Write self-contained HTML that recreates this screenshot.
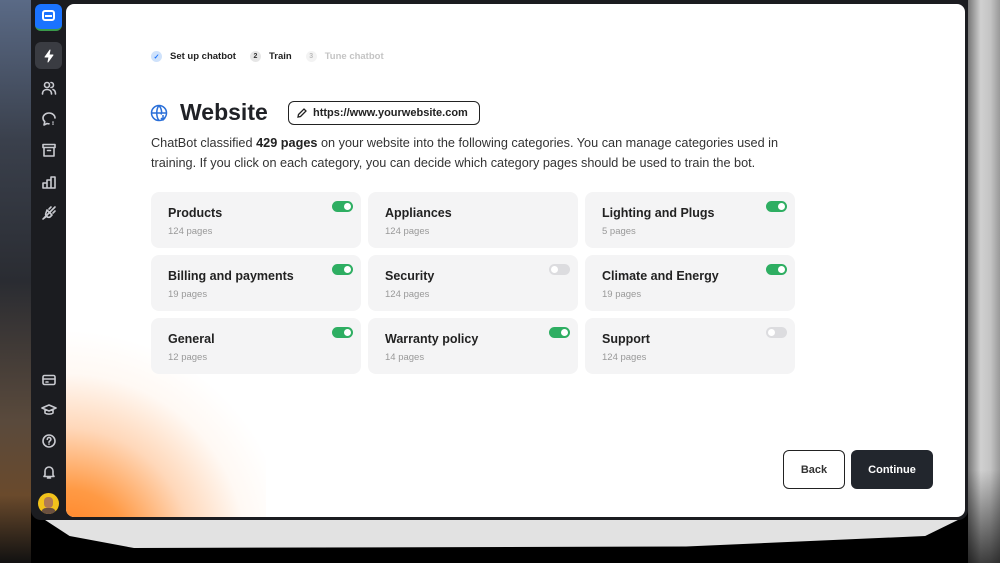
<!DOCTYPE html>
<html><head><style>
*{margin:0;padding:0;box-sizing:border-box}
html,body{width:1000px;height:563px;overflow:hidden}
body{background:#000;font-family:"Liberation Sans",sans-serif;position:relative}
.lbg{position:absolute;left:0;top:0;width:31px;height:563px;background:linear-gradient(180deg,#5a6a86 0%,#3a404c 25%,#2a2c32 50%,#5a4a3c 75%,#6a4a2c 88%,#111 100%)}
.rbg{position:absolute;left:968px;top:0;width:32px;height:563px;background:linear-gradient(90deg,#777 0%,#d0d0d0 40%,#c4c4c4 70%,#999 100%)}
.rbg2{position:absolute;left:968px;top:470px;width:32px;height:93px;background:linear-gradient(180deg,rgba(0,0,0,0),rgba(0,0,0,.7))}
.shadow{position:absolute;left:42px;top:518px;width:920px;height:30px;background:#e2e2e2;clip-path:polygon(0 0,100% 0,96% 60%,70% 95%,10% 100%,3% 60%)}
.frame{position:absolute;left:31px;top:0;width:937px;height:520px;background:#1b1c20;border-radius:0 0 10px 10px}
.panel{position:absolute;left:66px;top:4px;width:899px;height:513px;background:#fff;border-radius:8px;overflow:hidden}
.glow{position:absolute;left:-200px;top:250px;width:400px;height:400px;background:radial-gradient(circle at 50% 75%,#ff7a18 0%,#ff9a45 18%,rgba(255,190,140,.6) 35%,rgba(255,230,210,.25) 50%,rgba(255,255,255,0) 62%)}
.sb{position:absolute;left:31px;top:0;width:35px;height:520px}
.ic{position:absolute;left:4px;width:27px;height:27px;display:flex;align-items:center;justify-content:center}
.ic svg{width:16px;height:16px;fill:none;stroke:#c9cad0;stroke-width:1.6;stroke-linecap:round;stroke-linejoin:round}
.steps{position:absolute;left:151px;top:51px;font-size:9.5px;font-weight:bold;display:flex;align-items:center;color:#222}
.dot{width:11px;height:11px;border-radius:50%;display:inline-flex;align-items:center;justify-content:center;font-size:7px;margin-right:8px}
h1{position:absolute;left:180px;top:99px;font-size:23px;font-weight:bold;color:#1f2126}
.url{position:absolute;left:288px;top:101px;width:192px;height:24px;border:1.5px solid #222;border-radius:6px;font-size:11px;font-weight:bold;color:#222;padding:5px 0 0 24px}
.desc{position:absolute;left:151px;top:134px;width:660px;font-size:12.7px;line-height:19.5px;color:#333}
.card{position:absolute;width:210px;height:56px;background:#f4f4f5;border-radius:8px}
.card b{position:absolute;left:17px;top:14px;font-size:12.5px;color:#222}
.card span{position:absolute;left:17px;top:34px;font-size:9.5px;color:#999}
.tg{position:absolute;right:8px;top:9px;width:21px;height:11px;border-radius:6px;background:#2eae62}
.tg::after{content:"";position:absolute;right:2px;top:2px;width:7px;height:7px;border-radius:50%;background:#fff}
.tg.off{background:#dcdcdf}.tg.off::after{right:auto;left:2px}
.btn{position:absolute;top:450px;height:39px;border-radius:6px;font-size:11px;font-weight:bold;display:flex;align-items:center;justify-content:center}
</style></head><body>
<div class="lbg"></div><div class="rbg"></div><div class="rbg2"></div>
<div class="shadow"></div>
<div class="frame"></div>
<div class="sb">
<div style="position:absolute;left:4px;top:4px;width:27px;height:27px;background:#1a73ff;border-radius:6px;border-bottom:2px solid #3a9a4a"><div style="position:absolute;left:7px;top:6px;width:13px;height:11px;border:2px solid #fff;border-radius:3px"></div><div style="position:absolute;left:10px;top:11px;width:7px;height:2px;background:#fff"></div></div>
<div class="ic" style="top:42px;background:#3a3c42;border-radius:6px"><svg viewBox="0 0 16 16"><path d="M9 2L4 9h4l-1 5 5-7H8z" fill="#fff" stroke="#fff" stroke-width="1"/></svg></div>
<div class="ic" style="top:74px"><svg viewBox="0 0 16 16"><circle cx="6" cy="5" r="2.5"/><path d="M1.5 14c0-3 2-4.5 4.5-4.5S10.5 11 10.5 14M10 2.5a2.5 2.5 0 010 5M12 9.5c1.5.5 2.5 2 2.5 4.5"/></svg></div>
<div class="ic" style="top:105px"><svg viewBox="0 0 16 16"><path d="M8 2a6 5 0 00-6 5c0 1.5.7 2.7 1.8 3.6L3 14l3-1.5c.6.2 1.3.3 2 .3M14 7a6 5 0 00-6-5M12 11v.1M12 13v.1"/></svg></div>
<div class="ic" style="top:136px"><svg viewBox="0 0 16 16"><rect x="2" y="2.5" width="12" height="3"/><path d="M3 5.5V14h10V5.5M6.5 8.5h3"/></svg></div>
<div class="ic" style="top:168px"><svg viewBox="0 0 16 16"><path d="M2 14V9h4v5M6 14V6h4v8M10 14V3h4v11H2"/></svg></div>
<div class="ic" style="top:199px"><svg viewBox="0 0 16 16"><path d="M6 5l5 5-2 2a3 3 0 01-4-4zM8 4l2-2M12 8l2-2M6 11l-4 3M3 13l11-11"/></svg></div>
<div class="ic" style="top:366px"><svg viewBox="0 0 16 16"><rect x="2" y="3.5" width="12" height="9" rx="1.5"/><path d="M2 7h12M5 10h2"/></svg></div>
<div class="ic" style="top:396px"><svg viewBox="0 0 16 16"><path d="M1 6l7-3 7 3-7 3zM4 7.5V11c2 1.5 6 1.5 8 0V7.5"/></svg></div>
<div class="ic" style="top:427px"><svg viewBox="0 0 16 16"><circle cx="8" cy="8" r="6"/><path d="M6.3 6.3a1.8 1.8 0 113 1.3c-.8.5-1.3.9-1.3 1.7M8 11v.1"/></svg></div>
<div class="ic" style="top:458px"><svg viewBox="0 0 16 16"><path d="M4 11V7a4 4 0 018 0v4l1 1.5H3zM6.5 14h3"/></svg></div>
<div style="position:absolute;left:7px;top:493px;width:21px;height:21px;border-radius:50%;background:#f2c21b;overflow:hidden"><div style="position:absolute;left:6px;top:4px;width:9px;height:11px;border-radius:4px;background:#b07a55"></div><div style="position:absolute;left:3px;top:15px;width:15px;height:8px;border-radius:5px 5px 0 0;background:#6a5040"></div></div>
</div>
<div class="panel"><div class="glow"></div></div>
<div class="steps">
<span class="dot" style="background:#cfe2fb;color:#1a73ff">✓</span>Set up chatbot
<span class="dot" style="background:#e6e6e6;color:#333;margin-left:14px">2</span>Train
<span class="dot" style="background:#f3f3f3;color:#bbb;margin-left:14px">3</span><span style="color:#c4c4c4">Tune chatbot</span>
</div>
<svg style="position:absolute;left:150px;top:104px" width="18" height="18" viewBox="0 0 18 18" fill="none" stroke="#2a6fd8" stroke-width="1.5"><circle cx="9" cy="9" r="7.5"/><path d="M1.5 9h15M9 1.5c-3 3.5-3 11.5 0 15M9 1.5c3 3.5 3 7.5 2 9"/><path d="M13 11v5M11 14l2 2 2-2"/></svg>
<h1>Website</h1>
<div class="url"><svg style="position:absolute;left:8px;top:6px" width="10" height="10" viewBox="0 0 10 10" fill="none" stroke="#222" stroke-width="1.3"><path d="M1 9l.5-2.5L7 1l2 2-5.5 5.5z"/></svg>https://www.yourwebsite.com</div>
<div class="desc">ChatBot classified <b style="color:#222">429 pages</b> on your website into the following categories. You can manage categories used in training. If you click on each category, you can decide which category pages should be used to train the bot.</div>

<div class="card" style="left:151px;top:192px"><b>Products</b><span>124 pages</span><i class="tg"></i></div>
<div class="card" style="left:368px;top:192px"><b>Appliances</b><span>124 pages</span></div>
<div class="card" style="left:585px;top:192px"><b>Lighting and Plugs</b><span>5 pages</span><i class="tg"></i></div>
<div class="card" style="left:151px;top:255px"><b>Billing and payments</b><span>19 pages</span><i class="tg"></i></div>
<div class="card" style="left:368px;top:255px"><b>Security</b><span>124 pages</span><i class="tg off"></i></div>
<div class="card" style="left:585px;top:255px"><b>Climate and Energy</b><span>19 pages</span><i class="tg"></i></div>
<div class="card" style="left:151px;top:318px"><b>General</b><span>12 pages</span><i class="tg"></i></div>
<div class="card" style="left:368px;top:318px"><b>Warranty policy</b><span>14 pages</span><i class="tg"></i></div>
<div class="card" style="left:585px;top:318px"><b>Support</b><span>124 pages</span><i class="tg off"></i></div>

<div class="btn" style="left:783px;width:62px;border:1.5px solid #222;color:#333;background:#fff">Back</div>
<div class="btn" style="left:851px;width:82px;background:#22262d;color:#fff">Continue</div>
</body></html>
